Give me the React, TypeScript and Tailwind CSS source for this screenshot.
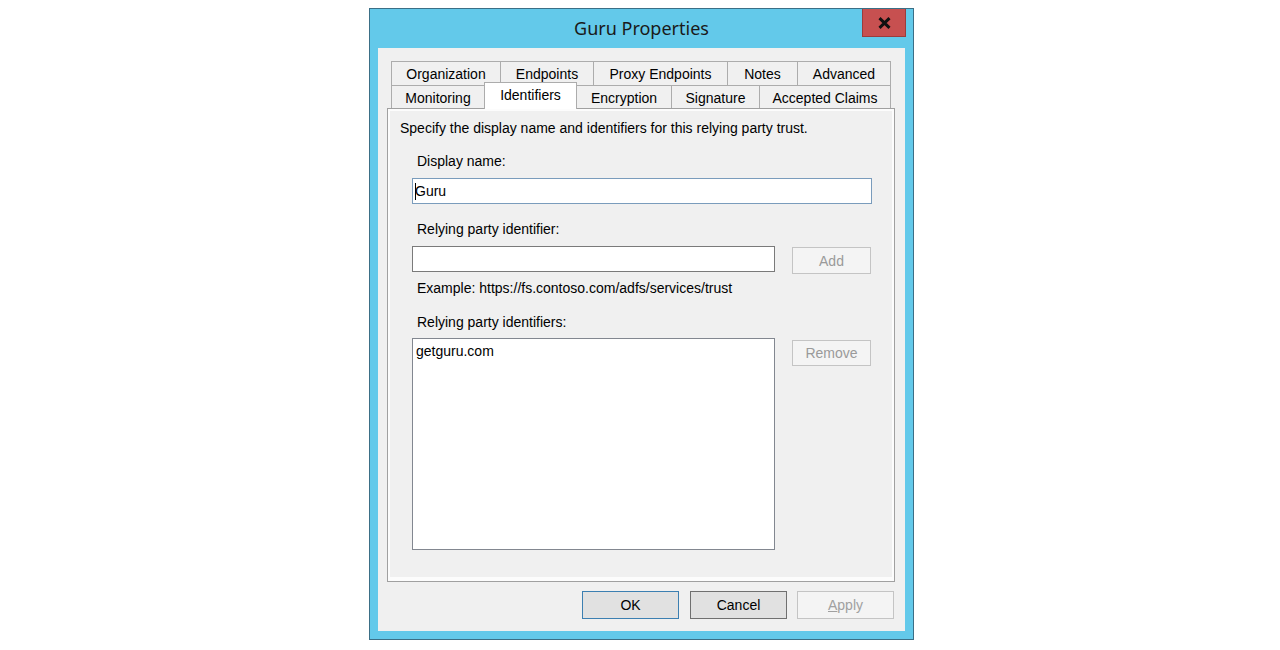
import React from "react";

const F = { fontFamily: '"Liberation Sans", Arial, sans-serif' };

function Tab({ label, w, cls = "" }: { label: string; w: string; cls?: string }) {
  return (
    <div
      className={`${w} h-full flex items-center justify-center border-t border-l border-[#acacac] bg-[#f0f0f0] text-[14px] leading-[16px] text-black ${cls}`}
    >
      {label}
    </div>
  );
}

function Btn({
  label,
  cls,
  children,
}: {
  label?: string;
  cls: string;
  children?: React.ReactNode;
}) {
  return (
    <div className={`flex items-center justify-center border text-[14px] leading-[16px] ${cls}`}>
      {children ?? label}
    </div>
  );
}

export default function App() {
  return (
    <div className="w-[1280px] h-[650px] bg-white pl-[369px] pt-[8px]" style={F}>
      <div className="w-[545px] h-[632px] border border-[#3b6f86] bg-[#63c9ea] flex flex-col">
        {/* title bar */}
        <div className="h-[39px] grid grid-cols-[1fr_auto_1fr]">
          <div />
          <div
            className="pt-[5px] text-[18px] leading-[28px] text-[#1a1a1a]"
            style={{ fontFamily: '"Noto Sans", "Open Sans", sans-serif' }}
          >
            Guru Properties
          </div>
          <div className="flex justify-end pr-[7px]">
            <div className="w-[44px] h-[28px] bg-[#c75050] border border-[#9b3c3c] border-t-0 flex items-center justify-center">
              <svg width="13" height="12" viewBox="0 0 13 12">
                <path d="M1.5 1.2 L11.5 10.8 M11.5 1.2 L1.5 10.8" stroke="#111" strokeWidth="3" />
              </svg>
            </div>
          </div>
        </div>

        {/* client */}
        <div className="mx-[8px] h-[583px] bg-[#f0f0f0] pt-[13px] pl-[9px] flex flex-col">
          {/* tabs */}
          <div className="ml-[4px] w-[500px] flex flex-col">
            <div className="h-[24px] flex">
              <Tab label="Organization" w="w-[109px]" />
              <Tab label="Endpoints" w="w-[93px]" />
              <Tab label="Proxy Endpoints" w="w-[134px]" />
              <Tab label="Notes" w="w-[70px]" />
              <Tab label="Advanced" w="w-[94px]" cls="border-r" />
            </div>
            <div className="h-[23px] flex items-start">
              <Tab label="Monitoring" w="w-[93px]" cls="pt-[2px]" />
              <div className="relative z-10 w-[93px] h-[27px] -mt-[3px] flex items-start justify-center pt-[4px] border-t border-l border-r border-[#acacac] bg-white text-[14px] leading-[16px] text-black">
                Identifiers
              </div>
              <Tab label="Encryption" w="w-[94px]" cls="border-l-0 pt-[2px]" />
              <Tab label="Signature" w="w-[88px]" cls="pt-[2px]" />
              <Tab label="Accepted Claims" w="w-[132px]" cls="border-r pt-[2px]" />
            </div>
          </div>

          {/* panel */}
          <div className="w-[508px] h-[474px] border border-[#a0a0a0] bg-[#fcfcfc] pt-[2px] px-[2px] pb-[4px]">
            <div className="w-full h-full bg-[#f0f0f0] flex flex-col text-[14px] leading-[16px] text-black">
              <p className="ml-[10px] mt-[9px] h-[16px]">
                Specify the display name and identifiers for this relying party trust.
              </p>
              <div className="ml-[27px] mt-[17px] h-[16px]">Display name:</div>
              <div className="ml-[22px] mt-[9px] w-[460px] h-[26px] border border-[#7a9cbc] bg-white flex items-center pl-[2px]">
                <span className="h-[17px] border-l border-black" />
                <span className="-ml-[1px]">Guru</span>
              </div>
              <div className="ml-[27px] mt-[17px] h-[16px]">Relying party identifier:</div>
              <div className="ml-[22px] mt-[9px] flex items-start">
                <div className="w-[363px] h-[26px] border border-[#7a7a7a] bg-white" />
                <Btn
                  label="Add"
                  cls="ml-[17px] mt-px w-[79px] h-[27px] border-[#c4c4c4] bg-[#f4f4f4] text-[#9a9a9a]"
                />
              </div>
              <div className="ml-[27px] mt-[6px] h-[16px]">
                Example: https://fs.contoso.com/adfs/services/trust
              </div>
              <div className="ml-[27px] mt-[18px] h-[16px]">Relying party identifiers:</div>
              <div className="ml-[22px] mt-[8px] flex items-start">
                <div className="w-[363px] h-[212px] border border-[#828790] bg-white pl-[3px] pt-[4px]">
                  getguru.com
                </div>
                <Btn
                  label="Remove"
                  cls="ml-[17px] mt-[2px] w-[79px] h-[26px] border-[#c4c4c4] bg-[#f4f4f4] text-[#9a9a9a]"
                />
              </div>
            </div>
          </div>

          {/* bottom buttons */}
          <div className="mt-[9px] flex justify-end pr-[11px] gap-[11px]">
            <Btn label="OK" cls="w-[97px] h-[28px] border-[#3c7fb1] bg-[#e1e1e1] text-black" />
            <Btn label="Cancel" cls="w-[97px] h-[28px] border-[#707070] bg-[#e1e1e1] text-black" />
            <Btn cls="-ml-px w-[97px] h-[28px] border-[#c4c4c4] bg-[#f4f4f4] text-[#a0a0a0]">
              <span>
                <span className="underline">A</span>pply
              </span>
            </Btn>
          </div>
        </div>
      </div>
    </div>
  );
}
